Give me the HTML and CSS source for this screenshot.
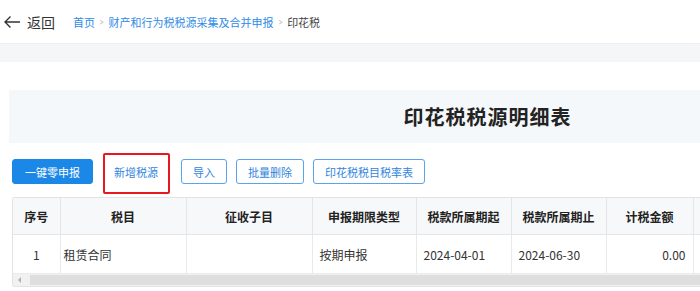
FILE: index.html
```html
<!DOCTYPE html>
<html lang="zh-CN">
<head>
  <meta charset="UTF-8" />
  <title>印花税税源明细表</title>
  <link rel="stylesheet" href="styles.css">
</head>
<body>

  <header class="topbar">
    <a class="back" href="#">
      <svg width="18" height="14" viewBox="0 0 18 14" aria-hidden="true">
        <path d="M17 7H2M7.5 1.5L2 7l5.5 5.5" fill="none" stroke="#333" stroke-width="1.4" />
      </svg>
      <span>返回</span>
    </a>
    <nav class="crumbs">
      <a href="#">首页</a>
      <span class="sep">&gt;</span>
      <a href="#">财产和行为税税源采集及合并申报</a>
      <span class="sep">&gt;</span>
      <span class="current">印花税</span>
    </nav>
  </header>

  <div class="band"></div>

  <main class="content">
    <div class="title-box">
      <h1>印花税税源明细表</h1>
    </div>

    <div class="toolbar">
      <button class="btn btn-primary">一键零申报</button>
      <button class="btn btn-marked">新增税源</button>
      <button class="btn">导入</button>
      <button class="btn">批量删除</button>
      <button class="btn">印花税税目税率表</button>
    </div>

    <div class="table-wrap">
      <table class="grid">
        <colgroup>
          <col style="width:47px">
          <col style="width:126px">
          <col style="width:126px">
          <col style="width:104px">
          <col style="width:95px">
          <col style="width:95px">
          <col style="width:87px">
          <col style="width:130px">
          <col>
        </colgroup>
        <thead>
          <tr>
            <th>序号</th>
            <th>税目</th>
            <th>征收子目</th>
            <th>申报期限类型</th>
            <th>税款所属期起</th>
            <th>税款所属期止</th>
            <th>计税金额</th>
            <th></th>
            <th></th>
          </tr>
        </thead>
        <tbody>
          <tr>
            <td class="center">1</td>
            <td class="tight">租赁合同</td>
            <td></td>
            <td>按期申报</td>
            <td>2024-04-01</td>
            <td>2024-06-30</td>
            <td class="num">0.00</td>
            <td></td>
            <td></td>
          </tr>
        </tbody>
      </table>
      <div class="hscroll">
        <span class="arrow"></span>
        <span class="thumb"></span>
      </div>
    </div>
  </main>

</body>
</html>
```

FILE: styles.css
```css
body {
  margin: 0;
  padding: 0;
  font-family: "Noto Sans CJK SC", "Noto Sans", sans-serif;
  color: #333;
  background: #fff;
  overflow: hidden;
}

/* top bar with back link and breadcrumb */
.topbar {
  height: 43px;
  display: flex;
  align-items: center;
  padding-left: 3px;
  border-bottom: 1px solid #eeeff1;
}
.back {
  display: flex;
  align-items: center;
  gap: 6px;
  text-decoration: none;
  color: #333;
  font-size: 14px;
}
.crumbs {
  margin-left: 18px;
  font-size: 11px;
  display: flex;
  align-items: center;
  gap: 4px;
}
.crumbs a {
  color: #2f8be6;
  text-decoration: none;
}
.crumbs .sep {
  color: #b5b5b5;
  font-size: 10px;
  transform: scaleX(0.7);
}
.crumbs .current {
  color: #444;
}

.band {
  height: 18px;
  background: #f5f6f8;
}

.content {
  padding: 28px 0 0 9px;
  width: 970px;
}

.title-box {
  width: 957px;
  height: 53px;
  background: #f5f8fa;
  display: flex;
  align-items: center;
  justify-content: center;
}
.title-box h1 {
  margin: 0;
  font-size: 20px;
  font-weight: bold;
  color: #222;
  letter-spacing: 1px;
}

/* buttons */
.toolbar {
  display: flex;
  gap: 9px;
  margin: 16px 0 0 3px;
}
.btn {
  height: 25px;
  padding: 0 11px;
  font-family: inherit;
  font-size: 11px;
  color: #2f86dd;
  background: #fff;
  border: 1px solid #5ba3ea;
  border-radius: 3px;
  cursor: pointer;
}
.btn-primary {
  background: #1b87e6;
  border-color: #1b87e6;
  color: #fff;
  padding: 0 12px;
}
.btn-marked {
  position: relative;
  border-color: transparent;
  margin-right: 2px;
}
.btn-marked::after {
  content: "";
  position: absolute;
  left: 0;
  right: -1px;
  top: -7px;
  bottom: -11px;
  border: 2px solid #e8191e;
  border-radius: 2px;
}

/* table */
.table-wrap {
  margin: 13px 0 0 3px;
  width: 954px;
  border: 1px solid #e2e3e5;
  border-radius: 2px;
}
.grid {
  width: 100%;
  border-collapse: collapse;
  table-layout: fixed;
  font-size: 12px;
}
.grid th {
  height: 36px;
  background: #f7f8fa;
  font-weight: bold;
  color: #222;
  border-right: 1px solid #e4e5e7;
  border-bottom: 1px solid #e4e5e7;
  padding: 0;
}
.grid td {
  height: 38px;
  padding: 0 7px;
  color: #333;
  border-right: 1px solid #e8e9eb;
  white-space: nowrap;
}
.grid th:last-child,
.grid td:last-child {
  border-right: none;
}
.grid td.center { text-align: center; }
.grid td.tight { padding-left: 3px; }
.grid td.num { text-align: right; }

.hscroll {
  height: 12px;
  background: #f1f1f1;
  display: flex;
  align-items: center;
  border-top: 1px solid #ececec;
}
.hscroll .arrow {
  width: 0;
  height: 0;
  margin: 0 6px 0 5px;
  border-top: 3px solid transparent;
  border-bottom: 3px solid transparent;
  border-right: 3px solid #b0b0b0;
}
.hscroll .thumb {
  flex: 1;
  height: 10px;
  margin-left: 3px;
  background: #dedede;
}
```
